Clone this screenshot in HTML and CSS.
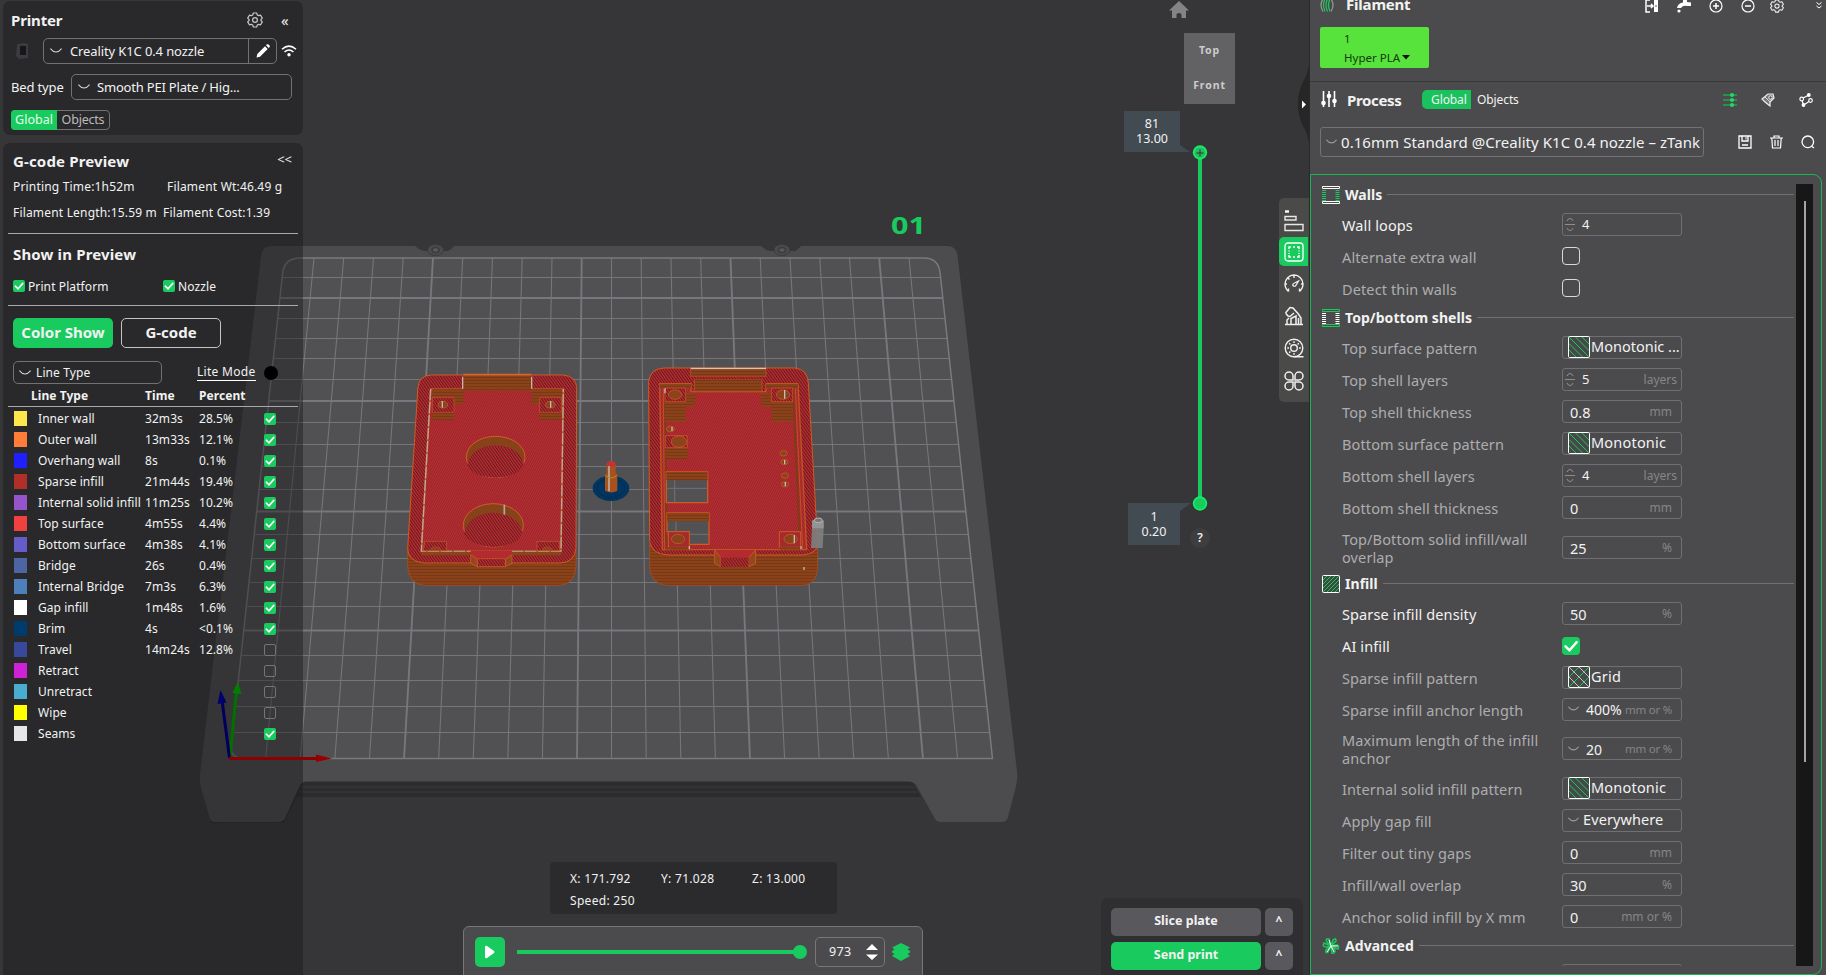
FILE: index.html
```
<!DOCTYPE html>
<html lang="en">
<head>
<meta charset="utf-8">
<title>Slicer preview</title>
<link rel="stylesheet" href="styles.css">
</head>
<body>
<svg width="0" height="0" class="defs">
  <defs>
    <symbol id="chev" viewBox="0 0 12 6"><path d="M.8 1 Q3 4 6 4 Q9 4 11.2 1" fill="none" stroke="currentColor" stroke-width="1.2" stroke-linecap="round"/></symbol>
    <symbol id="tick" viewBox="0 0 12 12"><path d="M2.3 6.2 5 8.8 9.8 3.4" fill="none" stroke="#fff" stroke-width="1.6" stroke-linecap="round"/></symbol>
    <symbol id="gear" viewBox="0 0 16 16"><path d="M6.3 1h3.4l.6 2 1.3.7 2-.5 1.7 2.9L13.900 7.600v.9l1.400 1.400-1.700 2.900-2-.5-1.300.7-.6 2H6.300l-.6-2-1.300-.7-2 .5L.7 9.900l1.400-1.400v-.9L.7 6.100l1.700-2.900 2 .5L5.700 3z" fill="none" stroke="currentColor" stroke-width="1.200" stroke-linejoin="round"/><circle cx="8" cy="8" r="2.400" fill="none" stroke="currentColor" stroke-width="1.200"/></symbol>
    <symbol id="spin" viewBox="0 0 10 15"><path d="M2 4Q3 1.500 5 1.500T8 4M2 11Q3 13.500 5 13.500T8 11M0 7.500H10" fill="none" stroke="currentColor" stroke-width="1"/></symbol>
    <symbol id="hatch" viewBox="0 0 22 22"><rect x=".5" y=".5" width="21" height="21" rx="1" fill="#454a48"/><path d="M1 14l7 7M1 7.500l13.500 13.500M1 1l20 20M7.500 1 21 14.500M14 1 21 8" stroke="#1cc75d" stroke-width="1" fill="none"/><rect x=".5" y=".5" width="21" height="21" rx="1" fill="none" stroke="#fff"/></symbol>
    <symbol id="gridpat" viewBox="0 0 22 22"><rect x=".5" y=".5" width="21" height="21" rx="1" fill="#474948"/><path d="M1 11 11 1M1 21 21 1M11 21 21 11" stroke="#1cc75d" fill="none"/><path d="M1 11 11 21M1 1 21 21M11 1 21 11" stroke="#c8c8c8" fill="none"/><rect x=".5" y=".5" width="21" height="21" rx="1" fill="none" stroke="#fff"/></symbol>
  </defs>
</svg>
<div class="app">
<main class="viewport">
  <svg class="scene" viewBox="0 0 1310 975" width="1310" height="975">
    <defs>
      <clipPath id="bed"><path d="M300 258H924Q938 258 940 272L993 759H243Q231 759 231 748L282.500 274Q284 258 300 258Z"/></clipPath>
      <pattern id="top" width="6" height="6" patternUnits="userSpaceOnUse" patternTransform="rotate(28)"><rect width="6" height="6" fill="#bb2d33"/><rect width="2.400" height="6" fill="#8e2527"/></pattern>
      <pattern id="rim" width="7" height="7" patternUnits="userSpaceOnUse" patternTransform="rotate(-35)"><rect width="7" height="7" fill="#c02e35"/><rect width="3.300" height="7" fill="#651a1b"/></pattern>
      <pattern id="side" width="8" height="9" patternUnits="userSpaceOnUse"><rect width="8" height="9" fill="#8a421b"/><rect width="8" height="3" fill="#7a3815"/></pattern>
    </defs>
    <path d="M303 781H912L921 797H296Z" fill="#2c2c2e"/>
    <path d="M302 787H914M299 792H917" stroke="#3b3b3d" fill="none"/>
    <path d="M210 822Q213 825 220 823H284L303 784 300 782 281 820Z" fill="#2d2d2f"/>
    <path d="M271 246H415Q419 250 424 251H448Q452 249 454 246H761Q765 250 770 251H795Q799 249 801 246H947Q956 246 957.500 255L1017.500 776Q1017 784 1014 794L1008 817Q1007 822 1001 822H941Q936 822 934 817L916 785Q914 781.500 908 781.500H307Q302 781.500 300 785L286 816Q284 822 278 822H216Q211 822 209.500 817L200.500 786Q199.500 780 200 775L261 256Q262 246 271 246Z" fill="#4c4c4e"/>
    <path d="M300 258H924Q938 258 940 272L993 759H231L282.500 274Q284 258 300 258Z" fill="#515153"/>
    <g fill="#4b4b4d" stroke="#3b3b3d"><ellipse cx="435.600" cy="250" rx="8" ry="5.500"/><ellipse cx="782" cy="250" rx="8" ry="5.500"/><ellipse cx="435.600" cy="250" rx="3.500" ry="2.500" fill="#5a5a5c" stroke-width="1.500"/><ellipse cx="782" cy="250" rx="3.500" ry="2.500" fill="#5a5a5c" stroke-width="1.500"/></g>
    <g clip-path="url(#bed)">
      <path d="M314 258 265.600 759M343.700 258 300.200 759M373.500 258 334.800 759M403.200 258 369.400 759M462.700 258 438.600 759M492.500 258 473.200 759M522.200 258 507.800 759M552 258 542.400 759M611.500 258V759M641.200 258 646.200 759M671 258 680.800 759M700.700 258 715.400 759M760.200 258 784.600 759M790 258 819.200 759M819.700 258 853.800 759M849.500 258 888.400 759M909 258 957.600 759M230 277.500H995M230 318.500H995M230 338.500H995M230 358.500H995M230 379.500H995M230 422.500H995M230 444.500H995M230 466.500H995M230 489.500H995M230 534.500H995M230 558.500H995M230 582.500H995M230 606.500H995M230 655.500H995M230 680.500H995M230 706.500H995M230 732.500H995" stroke="#76767a" stroke-width="1.100" fill="none"/>
      <path d="M433 258 404 759M581.700 258 577 759M730.500 258 750 759M879.200 258 923 759M230 298H995M230 401H995M230 511.500H995M230 630.500H995" stroke="#77777d" stroke-width="1.900" fill="none"/>
    </g>
    <path d="M300 258H924Q938 258 940 272L992.500 758.500H243Q231 758 231 748L282.500 274Q284 258 300 258Z" fill="none" stroke="#7a7a7e" stroke-width="1.500"/>
    <text x="891" y="234" class="plate-no" textLength="35" lengthAdjust="spacingAndGlyphs">01</text>

    <g transform="translate(390 350) scale(.33333)" stroke-linejoin="round">
      <!-- enclosure lid -->
      <path d="M53 595V650Q58 705 105 706H510Q555 703 558 650V595Z" fill="url(#side)" stroke="#b05220" stroke-width="2"/>
      <path d="M84 110Q88 76 125 75H518Q558 78 560 112L558 595Q553 637 512 639H100Q53 633 53 595Z" fill="url(#rim)" stroke="#cf5a22" stroke-width="3"/>
      <path d="M122 117H520L513 604H94Z" fill="url(#top)" stroke="#c0561f" stroke-width="5"/>
      <path d="M122 117 94 604H242M366 604H513L520 117" fill="none" stroke="#b9aa9c" stroke-width="4" stroke-dasharray="34 5"/>
      <path d="M127 118H220V162H192V140H127ZM424 118H516V140H449V162H424ZM220 75H424V122H220Z" fill="url(#side)"/>
      <path d="M220 74H424" stroke="#d9652a" stroke-width="5"/><path d="M218 80V116M425 80V116" stroke="#c7b5a6" stroke-width="4"/>
      <path d="M127 142H192V187H127ZM449 142H514V187H449Z" fill="url(#rim)" stroke="#c8591f" stroke-width="2"/>
      <path d="M127 188H192V209H127ZM449 188H514V209H449Z" fill="url(#side)"/>
      <g fill="#8a431b" stroke="#cf6228" stroke-width="2"><ellipse cx="159" cy="164" rx="14" ry="10"/><ellipse cx="481" cy="164" rx="14" ry="10"/></g>
      <path d="M157 153V173M482 153V173" stroke="#bbb" stroke-width="4"/>
      <g stroke="#d9652a" stroke-width="2.500"><ellipse cx="317" cy="321" rx="88" ry="62" fill="#87421a"/><ellipse cx="310" cy="526" rx="90" ry="65" fill="#87421a"/></g>
      <path d="M232 343Q245 288 317 286Q388 288 402 343Q387 382 317 383Q245 381 232 343ZM222 550Q235 492 310 488Q385 492 398 550Q382 588 310 591Q240 588 222 550Z" fill="url(#rim)"/>
      <path d="M343 464V494" stroke="#aaa" stroke-width="5"/>
      <path d="M104 574H170V602H100ZM441 574H508V602H441Z" fill="url(#rim)" stroke="#cf5a22" stroke-width="2"/>
      <path d="M121 598Q135 582 154 598ZM456 598Q472 582 488 598Z" fill="#8a431b" stroke="#cf6228"/>
      <path d="M94 605H242V616H94ZM366 605H514V616H366Z" fill="#8b4319"/>
      <path d="M242 603H366L362 625H246Z" fill="#b32b2f"/>
      <path d="M242 614 262 628V650L242 640ZM366 614 346 628V650L366 640Z" fill="#92471c" stroke="#d9652a" stroke-width="2"/>
      <path d="M262 626H346V650H262Z" fill="url(#rim)" stroke="#d9652a" stroke-width="2"/>
      <!-- button post with brim -->
      <ellipse cx="663" cy="415" rx="55" ry="38" fill="#003661"/><ellipse cx="663" cy="414" rx="42" ry="28" fill="none" stroke="#062a48" stroke-width="3"/><path d="M655 428 648 452M672 428 682 451" stroke="#062a48" stroke-width="2"/>
      <path d="M645 377Q645 372 650 370V342Q651 334 663 334Q675 334 677 342V370Q682 372 682 378V422Q664 433 645 422Z" fill="#a9501f"/>
      <ellipse cx="663" cy="342" rx="13" ry="8" fill="#c93034"/><path d="M657 348V424" stroke="#c9c1b8" stroke-width="4"/><path d="M646 376Q663 392 681 376" fill="none" stroke="#a29622" stroke-width="3"/>
      <!-- enclosure base -->
      <path d="M779 585V655Q785 703 830 706H1242Q1280 700 1283 655V590Z" fill="url(#side)" stroke="#b05220" stroke-width="2"/>
      <path d="M776 95Q780 56 822 54H1215Q1252 58 1255 98L1283 580Q1284 610 1240 615H835Q785 613 779 575Z" fill="url(#rim)" stroke="#cf5a22" stroke-width="3"/>
      <path d="M809 101H903V125H1128V101H1224L1250 599H817Z" fill="url(#top)" stroke="#c0561f" stroke-width="4"/>
      <path d="M825 115 830 599M1209 115 1231 599" fill="none" stroke="#7f3b17" stroke-width="6"/><path d="M820 115 824 599M1216 115 1238 599" fill="none" stroke="#d0602a" stroke-width="2"/>
      <path d="M902 57H1128V80H902ZM913 87H1116V125H913Z" fill="url(#side)" stroke="#c55a24" stroke-width="2"/><path d="M902 80H1128V88H902Z" fill="url(#rim)"/>
      <path d="M902 55H1128" stroke="#cfc5bd" stroke-width="4"/>
      <path d="M809 102H903V115H809ZM888 130H915V170H888ZM1114 130H1144V170H1114ZM1128 102H1224V115H1128ZM824 156H887V215H824ZM1144 156H1208V215H1144ZM826 294H892V327H826Z" fill="url(#side)"/>
      <path d="M825 114H887V155H825ZM1145 114H1208V155H1145ZM826 257H892V293H826Z" fill="url(#rim)" stroke="#cf5a22" stroke-width="2"/>
      <path d="M829 366H953V458H829ZM831 489H957V583H898V545H831Z" fill="#525254" stroke="#cf5a22" stroke-width="4"/>
      <path d="M854 391V458M858 514V545M829 415H953M831 553H957" stroke="#717175" stroke-width="3" fill="none"/>
      <path d="M829 366H953V391H829ZM831 489H957V514H831Z" fill="url(#side)"/>
      <path d="M835 545H898V592H835ZM1168 545H1232V592H1168Z" fill="#a52a2c" stroke="#cf5a22" stroke-width="3"/><path d="M836 591H900V599H836ZM1170 591H1234V599H1170Z" fill="#85401a"/>
      <g fill="#8a431b" stroke="#cf6228" stroke-width="2"><ellipse cx="855" cy="134" rx="20" ry="14"/><ellipse cx="1179" cy="134" rx="20" ry="14"/><ellipse cx="841" cy="237" rx="12" ry="8"/><ellipse cx="867" cy="275" rx="23" ry="17"/><ellipse cx="1181" cy="310" rx="11" ry="8"/><ellipse cx="1183" cy="336" rx="11" ry="8"/><ellipse cx="1185" cy="377" rx="11" ry="8"/><ellipse cx="1185" cy="403" rx="11" ry="8"/><ellipse cx="864" cy="567" rx="20" ry="14"/><ellipse cx="1202" cy="567" rx="20" ry="14"/></g>
      <path d="M1184 120V146M1213 555V580M846 230V243M1184 330V343M1186 396V409M898 589V598M1233 589V598M1242 651V660M825 115V130" stroke="#c4beb8" stroke-width="4"/>
      <path d="M974 600H1097V625H974Z" fill="#b32b2f"/>
      <path d="M974 600V640L992 650V623ZM1097 600V640L1076 650V623Z" fill="#92471c" stroke="#d9652a" stroke-width="2"/><path d="M992 623H1076V650H992Z" fill="url(#rim)"/>
      <!-- nozzle marker -->
      <path d="M1266 512Q1284 500 1301 512V535L1298 594H1263L1266 535Z" fill="#7e8080" opacity=".9"/><path d="M1266 512Q1284 500 1301 512V535H1266Z" fill="#939594"/><ellipse cx="1285" cy="511" rx="12" ry="7" fill="#777978" stroke="#b5b6b5" stroke-width="3"/>
    </g>
  </svg>

  <section class="card printer">
    <header><h2>Printer</h2><svg class="ic gear" width="16" height="16"><use href="#gear"/></svg><span class="fold">«</span></header>
    <div class="line dev">
      <svg width="14" height="18"><path d="M2 2 9 1 13 2V16L4 17 1 14Z" fill="#3b3b42"/><path d="M5 4h6v9H5z" fill="#17171a"/></svg>
      <div class="field sel"><svg width="12" height="6"><use href="#chev"/></svg><span>Creality K1C 0.4 nozzle</span><i class="edit"><svg width="16" height="16" viewBox="0 0 16 16"><path d="M1.500 14.500 2.300 11 10 3.300 12.700 6 5 13.700ZM11 2.300 12 1.300Q13 .8 14.200 2 15.200 3 14.700 4L13.700 5Z" fill="#fff"/></svg></i></div>
      <svg width="16" height="12" viewBox="0 0 16 12"><path d="M1 4.300Q8-2 15 4.300M3.500 7Q8 3 12.500 7" fill="none" stroke="#fff" stroke-width="1.500"/><circle cx="8" cy="9.800" r="1.700" fill="#fff"/></svg>
    </div>
    <div class="line bed"><label>Bed type</label><div class="field sel"><svg width="12" height="6"><use href="#chev"/></svg><span>Smooth PEI Plate / Hig...</span></div></div>
    <div class="toggle"><b>Global</b><span>Objects</span></div>
  </section>

  <section class="card gcode">
    <header><h2>G-code Preview</h2><span class="fold">&lt;&lt;</span></header>
    <div class="stats s1"><span>Printing Time:1h52m</span><span>Filament Wt:46.49 g</span></div>
    <div class="stats s2"><span>Filament Length:15.59 m</span><span>Filament Cost:1.39</span></div>
    <h2 class="sub">Show in Preview</h2>
    <div class="shows"><span><svg class="ck on" width="12" height="12"><use href="#tick"/></svg>Print Platform</span><span><svg class="ck on" width="12" height="12"><use href="#tick"/></svg>Nozzle</span></div>
    <div class="modes"><button class="on">Color Show</button><button>G-code</button></div>
    <div class="kind"><div class="field sel"><svg width="12" height="6"><use href="#chev"/></svg><span>Line Type</span></div><a>Lite Mode</a><i class="dot"></i></div>
    <div class="row head"><span></span><b>Line Type</b><b>Time</b><b>Percent</b></div>
    <div class="rows">
      <div class="row"><i class="sw c1"></i><span>Inner wall</span><span>32m3s</span><span>28.5%</span><svg class="ck on" width="12" height="12"><use href="#tick"/></svg></div>
      <div class="row"><i class="sw c2"></i><span>Outer wall</span><span>13m33s</span><span>12.1%</span><svg class="ck on" width="12" height="12"><use href="#tick"/></svg></div>
      <div class="row"><i class="sw c3"></i><span>Overhang wall</span><span>8s</span><span>0.1%</span><svg class="ck on" width="12" height="12"><use href="#tick"/></svg></div>
      <div class="row"><i class="sw c4"></i><span>Sparse infill</span><span>21m44s</span><span>19.4%</span><svg class="ck on" width="12" height="12"><use href="#tick"/></svg></div>
      <div class="row"><i class="sw c5"></i><span>Internal solid infill</span><span>11m25s</span><span>10.2%</span><svg class="ck on" width="12" height="12"><use href="#tick"/></svg></div>
      <div class="row"><i class="sw c6"></i><span>Top surface</span><span>4m55s</span><span>4.4%</span><svg class="ck on" width="12" height="12"><use href="#tick"/></svg></div>
      <div class="row"><i class="sw c7"></i><span>Bottom surface</span><span>4m38s</span><span>4.1%</span><svg class="ck on" width="12" height="12"><use href="#tick"/></svg></div>
      <div class="row"><i class="sw c8"></i><span>Bridge</span><span>26s</span><span>0.4%</span><svg class="ck on" width="12" height="12"><use href="#tick"/></svg></div>
      <div class="row"><i class="sw c9"></i><span>Internal Bridge</span><span>7m3s</span><span>6.3%</span><svg class="ck on" width="12" height="12"><use href="#tick"/></svg></div>
      <div class="row"><i class="sw c10"></i><span>Gap infill</span><span>1m48s</span><span>1.6%</span><svg class="ck on" width="12" height="12"><use href="#tick"/></svg></div>
      <div class="row"><i class="sw c11"></i><span>Brim</span><span>4s</span><span>&lt;0.1%</span><svg class="ck on" width="12" height="12"><use href="#tick"/></svg></div>
      <div class="row"><i class="sw c12"></i><span>Travel</span><span>14m24s</span><span>12.8%</span><i class="ck off"></i></div>
      <div class="row"><i class="sw c13"></i><span>Retract</span><span></span><span></span><i class="ck off"></i></div>
      <div class="row"><i class="sw c14"></i><span>Unretract</span><span></span><span></span><i class="ck off"></i></div>
      <div class="row"><i class="sw c15"></i><span>Wipe</span><span></span><span></span><i class="ck off"></i></div>
      <div class="row"><i class="sw c16"></i><span>Seams</span><span></span><span></span><svg class="ck on" width="12" height="12"><use href="#tick"/></svg></div>
    </div>
  </section>

  <svg class="axes" width="120" height="90" viewBox="215 675 120 90">
    <path d="M230 758 236.500 690" stroke="#007000" stroke-width="3"/><path d="M237.500 682 241.500 694 232.500 693Z" fill="#008000"/>
    <path d="M229.500 758 222 700" stroke="#00005c" stroke-width="3"/><path d="M220.500 690 226.500 702.500 217.500 704Z" fill="#00006e"/>
    <path d="M229 758.500H317" stroke="#8e0000" stroke-width="3"/><path d="M316 754.500 332 758.500 316 762Z" fill="#970000"/>
  </svg>

  <svg class="home" width="22" height="18" viewBox="0 0 22 18"><path d="M11 0 21 9.500H18V17H13.500V13.500Q13.500 12 11 12T8.500 13.500V17H4V9.500H1Z" fill="#848486"/></svg>
  <div class="cube"><span>Top</span><span>Front</span></div>
  <div class="bubble hi"><span>81</span><span>13.00</span></div>
  <div class="bubble lo"><span>1</span><span>0.20</span></div>
  <svg class="zbar" width="20" height="372" viewBox="1190 142 20 372"><path d="M1200 152V503" stroke="#19cb5f" stroke-width="4"/><circle cx="1200" cy="152.500" r="7.200" fill="#12ee66"/><circle cx="1200" cy="152.500" r="5.300" fill="#2fb862"/><path d="M1196.500 153H1203.500M1200 149.500V156.500" stroke="#17402a"/><circle cx="1200" cy="503.500" r="7.200" fill="#12f068"/><circle cx="1200" cy="503.500" r="5.500" fill="#19cb5f"/></svg>
  <div class="help">?</div>
  <svg class="handle" width="12" height="78" viewBox="0 0 12 78"><path d="M11 0Q10 8 5 17 0 26 0 39T5 61Q10 69 11 78Z" fill="#262627"/><path d="M4 35.500 8 39.500 4 43.500Z" fill="#fff"/></svg>
  <nav class="tabs">
    <span><svg width="20" height="22" viewBox="0 0 20 22"><path d="M1 1.500H5" stroke="#fff" stroke-width="2.400"/><path d="M1 6.500H12V10H1ZM1 14.500H19V20.500H1Z" fill="none" stroke="#e8e8e8" stroke-width="1.400"/></svg></span>
    <span class="on"><svg width="20" height="20" viewBox="0 0 20 20"><rect x="1" y="1" width="18" height="18" rx="3" fill="none" stroke="#fff" stroke-width="1.300"/><path d="M5 7V5H7M13 5H15V7M15 13V15H13M7 15H5V13M9 5h2M9 15h2M5 8.500v1M15 8.500v1M5 11v1M15 11v1" fill="none" stroke="#fff" stroke-width="1.400"/></svg></span>
    <span><svg width="20" height="20" viewBox="0 0 20 20"><path d="M4.500 17.500Q1 14.500 1 10A9 9 0 0 1 19 10Q19 14.500 15.500 17.500M4.500 17.500V14.500M15.500 17.500V14.500M4 4 5.500 5.500M10 1V4M1 10H3M17 10H19" fill="none" stroke="#f0f0f0" stroke-width="1.400"/><path d="M14.500 7 11.500 12Q9.500 13 8.700 11 9 9.500 10.500 9Z" fill="none" stroke="#f0f0f0" stroke-width="1.300"/></svg></span>
    <span><svg width="20" height="20" viewBox="0 0 20 20"><path d="M1 18.500H19M3 18V14L5 12M1.500 7 6 1.500 9 2 14 7.500 17 12V18M1.500 7 4 10 6 10.500 10 7M7 18V12.500L12 10V18M14.500 18V12" fill="none" stroke="#f0f0f0" stroke-width="1.500"/></svg></span>
    <span><svg width="20" height="20" viewBox="0 0 20 20"><circle cx="10" cy="10" r="8.800" fill="none" stroke="#f0f0f0" stroke-width="1.400"/><circle cx="10" cy="10" r="3.300" fill="none" stroke="#f0f0f0" stroke-width="1.400"/><path d="M10 3.200V5M10 15V16.800M3.200 10H5M15 10H16.800M5.200 5.200 6.400 6.400M13.600 6.400 14.800 5.200M5.200 14.800 6.400 13.600M10 18.800H19.500" stroke="#f0f0f0" stroke-width="1.400"/></svg></span>
    <span><svg width="20" height="20" viewBox="0 0 20 20"><path d="M9 9H5A4 4 0 1 1 9 5ZM11 9H15A4 4 0 1 0 11 5ZM9 11H5A4 4 0 1 0 9 15ZM11 11H15A4 4 0 1 1 11 15Z" fill="none" stroke="#f0f0f0" stroke-width="1.500"/></svg></span>
  </nav>
  <div class="coords"><div><span>X: 171.792</span><span>Y: 71.028</span><span>Z: 13.000</span></div><div>Speed: 250</div></div>
  <div class="player">
    <i class="play"><svg width="12" height="14" viewBox="0 0 12 14"><path d="M1 2Q1 0 3 1L10 6Q11 7 10 8L3 13Q1 14 1 12Z" fill="#fff"/></svg></i>
    <i class="track"><i class="knob"></i></i>
    <div class="num"><span>973</span><svg width="12" height="16" viewBox="0 0 12 16"><path d="M6 0 12 6H0ZM6 16 12 10.500H0Z" fill="#fff"/></svg></div>
    <svg width="18" height="18" viewBox="0 0 18 18"><path d="M9 0 18 4.500 15.500 6.500 18 8 18 9.500 15.500 11 18 13 9 18 0 13 2.500 11 0 9.500V8L2.500 6.500 0 4.500Z" fill="#19cb5f"/></svg>
  </div>
  <div class="actions"><button>Slice plate</button><button class="car">^</button><button class="go">Send print</button><button class="car">^</button></div>
</main>

<aside class="side">
  <div class="fil-head">
    <svg width="14" height="15" viewBox="0 0 14 15"><path d="M3 1Q-1 7 3 13.500M11 1Q15 7 11 13.500" fill="none" stroke="#9a9a9a" stroke-width="1.200"/><path d="M5 1Q2 7 5 13.500M7.500 1Q4.500 7 7.500 13.500M10 1Q7 7 10 13.500" fill="none" stroke="#1cc75d" stroke-width="1.200"/></svg>
    <h2>Filament</h2>
    <svg class="a1" width="14" height="14" viewBox="0 0 14 14"><path d="M5 1H1V13H5M2 7H8M6 5 8 7 6 9" fill="none" stroke="#fff" stroke-width="1.500"/><path d="M9 1H13V13H9Z" fill="#fff"/><path d="M10 7h2" stroke="#4b4b4d"/></svg>
    <svg class="a2" width="14" height="14" viewBox="0 0 14 14"><path d="M6 0H10V3L14 3.500V7H10Q6 6 4 9H0Q1 4 6 3.500Z" fill="#fff"/><circle cx="2" cy="12" r="1.600" fill="#fff"/></svg>
    <svg class="a3" width="14" height="14" viewBox="0 0 14 14"><circle cx="7" cy="7" r="6" fill="none" stroke="#fff" stroke-width="1.200"/><path d="M4 7h6M7 4v6" stroke="#fff" stroke-width="1.500"/></svg>
    <svg class="a4" width="14" height="14" viewBox="0 0 14 14"><circle cx="7" cy="7" r="6" fill="none" stroke="#fff" stroke-width="1.200"/><path d="M4 7h6" stroke="#fff" stroke-width="1.500"/></svg>
    <svg class="a5" width="14" height="14"><use href="#gear"/></svg>
    <svg class="a6" width="6" height="7" viewBox="0 0 6 7"><path d="M.5.5 3 2.500 5.500.5M.5 4 3 6 5.500 4" fill="none" stroke="#fff"/></svg>
  </div>
  <div class="fil-card"><span>1</span><span>Hyper PLA<svg width="8" height="5" viewBox="0 0 8 5"><path d="M0 0H8L4 4.500Z" fill="#111"/></svg></span></div>
  <div class="proc-head">
    <svg width="16" height="17" viewBox="0 0 16 17"><path d="M2.500 0V16M8 0V16M13.500 0V16" stroke="#fff" stroke-width="1.600"/><circle cx="2.500" cy="12" r="2.300" fill="#fff"/><circle cx="8" cy="5" r="2.300" fill="#fff"/><circle cx="13.500" cy="10" r="2.300" fill="#fff"/></svg>
    <h2>Process</h2><b>Global</b><span>Objects</span>
    <svg class="p1" width="14" height="14" viewBox="0 0 14 14"><path d="M0 2H14M0 7H14M0 12H14" stroke="#25a453" stroke-width="1.600"/><g fill="#1fdc66"><circle cx="9" cy="2" r="2"/><circle cx="9" cy="7" r="2"/><circle cx="9" cy="12" r="2"/></g></svg>
    <svg class="p2" width="14" height="14" viewBox="0 0 14 14"><path d="M1 6 7 1H12L13 5 9 9V13L4 9Z" fill="#777" stroke="#eee" stroke-width="1.200"/><circle cx="9.500" cy="4.500" r="1.700" fill="#4b4b4d" stroke="#fff"/><path d="M2 7 8 12M4 4 9 9" stroke="#ddd"/></svg>
    <svg class="p3" width="14" height="14" viewBox="0 0 14 14"><path d="M4 5 9 2.500M5.500 11.500 10 8.500M3.200 8 4.200 11" stroke="#fff" stroke-width="1.200"/><circle cx="2.700" cy="6" r="1.800" fill="none" stroke="#fff" stroke-width="1.200"/><circle cx="9.800" cy="2" r="1.900" fill="#fff"/><circle cx="11.500" cy="7.500" r="1.800" fill="none" stroke="#fff" stroke-width="1.200"/><circle cx="4.500" cy="12" r="1.900" fill="#fff"/></svg>
  </div>
  <div class="preset"><div class="field"><svg width="11" height="6"><use href="#chev"/></svg><span>0.16mm Standard @Creality K1C 0.4 nozzle – zTank</span></div>
    <svg class="q1" width="14" height="14" viewBox="0 0 14 14"><path d="M1 1H13V13H1ZM4 1V6H10V1M4 10H10" fill="none" stroke="#fff" stroke-width="1.300"/><path d="M8 2V4.500" stroke="#fff"/></svg>
    <svg class="q2" width="13" height="14" viewBox="0 0 13 14"><path d="M0 3H13M4 3V1H9V3M1.800 3 2.500 13H10.500L11.200 3M5 5V11M8 5V11" fill="none" stroke="#fff" stroke-width="1.200"/></svg>
    <svg class="q3" width="14" height="14" viewBox="0 0 14 14"><circle cx="6.800" cy="6.800" r="5.800" fill="none" stroke="#fff" stroke-width="1.300"/><path d="M10.500 11 13 13" stroke="#fff" stroke-width="1.300"/></svg>
  </div>
  <div class="settings">
    <div class="list">
      <div class="sec"><svg width="18" height="18" viewBox="0 0 18 18"><path d="M.5.500H17.500V2.500H.5ZM.5 15.500H17.500V17.500H.5Z" fill="none" stroke="#fff"/><path d="M2 4V15M15.500 4V15" stroke="#1cc75d" stroke-width="4" stroke-dasharray="1 1"/></svg><h3>Walls</h3><i></i></div>
      <div class="opt hot"><label>Wall loops</label><div class="box"><svg class="sp" width="10" height="15"><use href="#spin"/></svg><span>4</span></div></div>
      <div class="opt"><label>Alternate extra wall</label><i class="cb"></i></div>
      <div class="opt"><label>Detect thin walls</label><i class="cb"></i></div>
      <div class="sec tall"><svg width="18" height="18" viewBox="0 0 18 18"><path d="M.5.500H17.500V2.500H.5ZM.5 15.500H17.500V17.500H.5Z" fill="none" stroke="#1cc75d"/><path d="M2 4V15M15.500 4V15" stroke="#fff" stroke-width="4" stroke-dasharray="1 1"/></svg><h3>Top/bottom shells</h3><i></i></div>
      <div class="opt"><label>Top surface pattern</label><div class="box pat"><svg width="22" height="22"><use href="#hatch"/></svg><span class="cut">Monotonic ...</span></div></div>
      <div class="opt"><label>Top shell layers</label><div class="box"><svg class="sp" width="10" height="15"><use href="#spin"/></svg><span>5</span><em>layers</em></div></div>
      <div class="opt"><label>Top shell thickness</label><div class="box val"><span>0.8</span><em>mm</em></div></div>
      <div class="opt"><label>Bottom surface pattern</label><div class="box pat"><svg width="22" height="22"><use href="#hatch"/></svg><span>Monotonic</span></div></div>
      <div class="opt"><label>Bottom shell layers</label><div class="box"><svg class="sp" width="10" height="15"><use href="#spin"/></svg><span>4</span><em>layers</em></div></div>
      <div class="opt"><label>Bottom shell thickness</label><div class="box val"><span>0</span><em>mm</em></div></div>
      <div class="opt two"><label>Top/Bottom solid infill/wall<br>overlap</label><div class="box val"><span>25</span><em>%</em></div></div>
      <div class="sec"><svg width="18" height="18" viewBox="0 0 18 18"><rect x=".5" y=".5" width="17" height="17" rx="1" fill="#3b4b42"/><path d="M1 5 5 1M1 9 9 1M1 13 13 1M1 17 17 1M5 17 17 5M9 17 17 9M13 17 17 13" stroke="#1cc75d"/><rect x=".5" y=".5" width="17" height="17" rx="1" fill="none" stroke="#fff"/></svg><h3>Infill</h3><i></i></div>
      <div class="opt hot"><label>Sparse infill density</label><div class="box val"><span>50</span><em>%</em></div></div>
      <div class="opt hot"><label>AI infill</label><svg class="cb on" width="18" height="18"><use href="#tick"/></svg></div>
      <div class="opt"><label>Sparse infill pattern</label><div class="box pat"><svg width="22" height="22"><use href="#gridpat"/></svg><span>Grid</span></div></div>
      <div class="opt"><label>Sparse infill anchor length</label><div class="box drop"><svg width="11" height="6"><use href="#chev"/></svg><span>400%</span><em>mm or %</em></div></div>
      <div class="opt two b"><label>Maximum length of the infill<br>anchor</label><div class="box drop"><svg width="11" height="6"><use href="#chev"/></svg><span>20</span><em>mm or %</em></div></div>
      <div class="opt"><label>Internal solid infill pattern</label><div class="box pat"><svg width="22" height="22"><use href="#hatch"/></svg><span>Monotonic</span></div></div>
      <div class="opt"><label>Apply gap fill</label><div class="box drop tight"><svg width="11" height="6"><use href="#chev"/></svg><span>Everywhere</span></div></div>
      <div class="opt"><label>Filter out tiny gaps</label><div class="box val"><span>0</span><em>mm</em></div></div>
      <div class="opt"><label>Infill/wall overlap</label><div class="box val"><span>30</span><em>%</em></div></div>
      <div class="opt"><label>Anchor solid infill by X mm</label><div class="box val"><span>0</span><em>mm or %</em></div></div>
      <div class="sec tall"><svg width="18" height="18" viewBox="0 0 18 18"><g fill="none" stroke="#1cc75d" stroke-width="1.600"><path d="M9 9 5 5Q3 1 7 2ZM9 9 11 3Q14 0 14 4ZM9 9 14 8Q18 8 16 12ZM9 9 13 13Q13 17 10 16ZM9 9 6 15Q3 17 4 13ZM9 9 4 10Q0 10 2 6Z"/></g><path d="M9 9 7 3M9 9 16 9M9 9 5 15M9 9 12 15" stroke="#fff"/></svg><h3>Advanced</h3><i></i></div>
      <div class="opt"><label></label><div class="box"></div></div>
    </div>
    <div class="scroll"><i></i></div>
  </div>
</aside>
</div>
</body>
</html>
```
FILE: styles.css
```
* { box-sizing: border-box; }
body { margin: 0; background: #363638; font-family: "Noto Sans", "Open Sans", sans-serif; color: #f2f2f2; overflow: hidden; }
h2, h3 { margin: 0; font-weight: 700; white-space: nowrap; }
i, em { font-style: normal; }
svg { display: block; flex: none; }
span, label, a, b { white-space: nowrap; }
.defs { position: absolute; }
button { font: inherit; color: inherit; border: 0; padding: 0; }
.app { display: grid; grid-template-columns: 1310px 516px; height: 975px; overflow: hidden; }

.viewport { position: relative; height: 975px; overflow: hidden; padding: 1px 0 0 3px; display: flex; flex-direction: column; gap: 8px; align-items: flex-start; background: #363638; }
.scene { position: absolute; left: 0; top: 0; }
.plate-no { font: 700 24px "Noto Sans", sans-serif; fill: #19cb5f; }
.card { position: relative; width: 300px; border-radius: 7px; background: rgba(25, 25, 28, .44); font-size: 13px; }
.card header { display: flex; align-items: center; }
.card h2 { font-size: 15px; }
.field { display: flex; align-items: center; border: 1px solid #727274; border-radius: 5px; }
.field svg { color: #ddd; }

.printer { height: 134px; padding: 7px 0 0 8px; }
.printer header { height: 24px; }
.printer .gear { margin-left: auto; color: #c9c9c9; }
.printer .fold { width: 40px; padding-left: 18px; font-size: 15px; }
.printer h2 { letter-spacing: -.15px; }
.line { display: flex; align-items: center; }
.dev { height: 26px; margin-top: 6px; padding-left: 4px; }
.dev .field { width: 234px; height: 26px; margin: 0 4px 0 14px; padding-left: 6px; }
.dev .field span { margin-left: 8px; flex: 1; letter-spacing: -.12px; }
.edit { width: 28px; height: 24px; border-left: 1px solid #727274; display: grid; place-items: center; }
.bed { margin-top: 10px; }
.bed .field { width: 221px; height: 26px; margin-left: 7px; padding-left: 6px; }
.bed .field span { margin-left: 7px; letter-spacing: -.2px; }
.bed label { width: 53px; letter-spacing: -.15px; }
.toggle { display: flex; width: 99px; height: 20px; margin-top: 10px; border: 1px solid #727274; border-radius: 4px; font-size: 12.500px; line-height: 18px; color: #bbb; }
.toggle b { width: 46px; margin: -1px 0 -1px -1px; line-height: 20px; text-align: center; font-weight: 400; color: #e4ffe9; background: #19cb5f; border-radius: 4px 0 0 4px; }
.toggle span { flex: 1; text-align: center; letter-spacing: -.2px; }

.gcode { height: 832px; padding: 5px 5px 0 5px; border-radius: 7px 7px 0 0; font-size: 12px; }
.gcode header { height: 25px; padding: 0 6px 0 5px; justify-content: space-between; }
.gcode h2 { letter-spacing: .15px; }
.gcode .fold { font-size: 13px; margin-top: -3px; }
.stats { display: grid; grid-template-columns: 154px 1fr; height: 26px; align-items: center; padding-left: 5px; letter-spacing: .18px; }
.s2 { grid-template-columns: 150px 1fr; }
.sub { height: 44px; line-height: 41px; padding-left: 5px; margin-top: 8px; border-top: 1px solid #a9a9ab; }
.shows { display: grid; grid-template-columns: 150px 1fr; height: 29px; padding: 1px 0 0 5px; border-bottom: 1px solid #a9a9ab; letter-spacing: .1px; }
.shows span { display: flex; align-items: center; gap: 3px; height: 16px; }
.ck { border-radius: 2px; width: 12px; height: 12px; }
.ck.on { background: #19cb5f; }
.ck.off { border: 1px solid #747476; }
.modes { display: flex; gap: 8px; padding: 12px 0 0 5px; }
.modes button { width: 100px; height: 30px; border-radius: 5px; font-weight: 700; font-size: 15px; line-height: 26px; padding-bottom: 2px; background: none; border: 1px solid #c4c4c4; }
.modes .on { background: #19cb5f; border: 0; }
.kind { display: flex; align-items: center; padding: 13px 0 0 5px; height: 36px; }
.kind .field { width: 149px; height: 23px; padding-left: 5px; }
.kind .field span { margin-left: 5px; letter-spacing: .1px; }
.kind a { margin-left: 35px; width: 59px; height: 17px; line-height: 16px; border-bottom: 1px solid #fff; letter-spacing: .3px; }
.dot { width: 14px; height: 14px; margin-left: 8px; border-radius: 50%; background: #000; }
.row { display: grid; grid-template-columns: 25px 107px 54px 65px 12px; height: 21px; align-items: center; padding-left: 5px; letter-spacing: .06px; }
.head { grid-template-columns: 18px 114px 54px 1fr; height: 23px; border-bottom: 1px solid #a9a9ab; }
.rows { padding-top: 1px; }
.sw { width: 13px; height: 15px; margin-left: 1px; }
.c1 { background: #ffe64d; } .c2 { background: #ff7d38; } .c3 { background: #1f1fff; } .c4 { background: #b03029; }
.c5 { background: #9654cc; } .c6 { background: #f04040; } .c7 { background: #665cc7; } .c8 { background: #4d66a3; }
.c9 { background: #4d80ba; } .c10 { background: #fff; } .c11 { background: #003b6e; } .c12 { background: #38489b; }
.c13 { background: #cd22d6; } .c14 { background: #49adcf; } .c15 { background: #ff0; } .c16 { background: #e6e6e6; }

.axes { position: absolute; left: 215px; top: 675px; }
.home { position: absolute; left: 1168px; top: 1px; }
.cube { position: absolute; left: 1184px; top: 33px; width: 51px; height: 71px; padding-top: 8px; background: #626264; font: 700 10.500px "Noto Sans", sans-serif; color: #ccc; display: grid; grid-template-rows: 35px 35px; text-align: center; line-height: 19px; letter-spacing: .9px; }
.bubble { position: absolute; width: 56px; height: 41px; padding-top: 5px; background: #424a52; display: grid; text-align: center; font-size: 12.500px; line-height: 15px; align-content: start; }
.bubble.hi { left: 1124px; top: 111px; }
.bubble.hi::after { content: ""; position: absolute; left: 56px; top: 34px; border-left: 10px solid #424a52; border-top: 7px solid transparent; }
.bubble.lo { left: 1128px; top: 503px; width: 52px; height: 42px; padding-top: 6px; }
.bubble.lo::after { content: ""; position: absolute; left: 52px; top: 0; border-left: 11px solid #424a52; border-bottom: 8px solid transparent; }
.zbar { position: absolute; left: 1190px; top: 142px; }
.help { position: absolute; left: 1190px; top: 528px; width: 20px; height: 20px; border-radius: 50%; background: #3e3e40; text-align: center; font: 600 12px/19px "Noto Sans", sans-serif; }
.handle { position: absolute; left: 1298px; top: 65px; }
.tabs { position: absolute; left: 1279px; top: 198px; width: 30px; height: 204px; padding-top: 6px; border-radius: 5px 0 0 5px; background: #4a4b48; display: grid; grid-template-rows: 33px 29px 36px 28px 36px 29px; }
.tabs span { display: grid; place-items: center; }
.tabs .on { width: 29px; background: #19cb5f; border-radius: 5px 0 0 5px; }
.coords { position: absolute; left: 550px; top: 862px; width: 287px; height: 52px; padding: 6px 0 0 20px; border-radius: 4px; background: #2b2b2d; font-size: 12px; letter-spacing: .3px; line-height: 22px; }
.coords div:first-child { display: grid; grid-template-columns: 91px 91px 1fr; }
.player { position: absolute; left: 463px; top: 926px; width: 460px; height: 56px; border: 1px solid #77777a; border-radius: 6px; background: #4b4b4d; display: flex; align-items: center; padding: 0 0 4px 11px; }
.play { width: 30px; height: 30px; border-radius: 5px; background: #19cb5f; display: grid; place-items: center; }
.track { width: 283px; height: 4px; margin: 0 15px 0 12px; background: #19cb5f; position: relative; }
.knob { position: absolute; right: -7px; top: -5px; width: 14px; height: 14px; border-radius: 50%; background: #19cb5f; }
.num { width: 70px; height: 30px; border: 1px solid #77777a; border-radius: 5px; margin-right: 7px; display: flex; align-items: center; justify-content: space-between; padding: 0 6px 2px 13px; font-size: 12.500px; }
.num span { letter-spacing: .3px; }
.num svg { margin-top: 2px; }
.actions { position: absolute; left: 1101px; top: 898px; width: 202px; height: 77px; padding: 10px 0 0 10px; border-radius: 7px 7px 0 0; background: #2f2f31; display: grid; grid-template-columns: 150px 28px; grid-template-rows: 28px 28px; gap: 6px 4px; }
.actions button { border-radius: 5px; background: #58585d; font-weight: 700; font-size: 12.500px; line-height: 26px; padding-bottom: 2px; }
.actions .go { background: #19cb5f; }
.actions .car { font-size: 12px; }

.side { background: #4b4b4d; height: 975px; overflow: hidden; box-shadow: -1px 0 #29292b; z-index: 1; padding-left: 10px; }
.side h2 { font-size: 15px; letter-spacing: -.2px; }
.fil-head { display: flex; align-items: flex-end; height: 13px; }
.fil-head h2 { margin-left: 12px; width: 299px; line-height: 13px; height: 13px; margin-bottom: 2px; }
.fil-head .a2 { margin-left: 18px; } .fil-head .a3 { margin-left: 18px; } .fil-head .a4 { margin-left: 18px; } .fil-head .a5 { margin-left: 15px; } .fil-head .a6 { margin: 0 0 4px 32px; }
.fil-card { width: 109px; height: 41px; margin-top: 14px; padding: 2px 0 0 24px; border-radius: 2px; background: #58e23c; color: #123c0c; font-size: 11.500px; line-height: 19px; display: grid; grid-template-rows: 18px 20px; }
.fil-card span { display: flex; align-items: center; gap: 2px; }
.proc-head { display: flex; align-items: center; margin: 13px 0 0 -10px; padding: 0 0 2px 11px; border-top: 1px solid #39393b; height: 38px; }
.proc-head h2 { margin-left: 10px; width: 75px; letter-spacing: -.35px; }
.proc-head b { width: 49px; height: 19px; line-height: 19px; padding-left: 9px; background: #19c25c; border-radius: 5px 0 0 5px; font-weight: 400; font-size: 12px; letter-spacing: -.1px; }
.proc-head span { margin-left: 6px; width: 246px; font-size: 12px; letter-spacing: -.1px; }
.p2, .p3 { margin-left: 24px; }
.preset { display: flex; align-items: center; margin-top: 8px; height: 30px; }
.preset .field { width: 384px; flex: none; height: 30px; padding-left: 5px; border-radius: 3px; font-size: 15px; margin-right: 34px; }
.preset .field svg { color: #999; }
.preset span { margin-left: 4px; letter-spacing: .06px; }
.q2 { margin-left: 18px; } .q3 { margin-left: 18px; }
.settings { margin: 17px 0 0 -10px; width: 512px; height: 801px; border: 1px solid #1cb556; border-radius: 0 9px 9px 0; padding: 7px 0 0 11px; display: flex; gap: 2px; }
.list { width: 472px; height: 784px; overflow: hidden; }
.sec { height: 26px; display: flex; align-items: center; gap: 5px; padding-bottom: 1px; }
.sec.tall { height: 27px; padding-bottom: 0; }
.sec h3 { font-size: 14px; letter-spacing: .05px; }
.sec i { flex: 1; height: 1px; background: #717173; }
.opt { height: 32px; display: grid; grid-template-columns: 220px 120px; align-items: center; padding-left: 20px; font-size: 14.500px; color: #adadaf; }
.opt.hot { color: #f2f2f2; }
.opt.two { height: 48px; line-height: 18px; }
.opt.two.b { height: 47px; }
.opt label { letter-spacing: .12px; padding-top: 1px; }
.box { position: relative; width: 120px; height: 23px; border: 1px solid #707072; border-radius: 3px; display: flex; align-items: center; color: #f2f2f2; padding-left: 2px; line-height: 21px; }
.box span { font-size: 13px; margin-left: 7px; }
.box em { margin-left: auto; padding-right: 9px; font-size: 12px; color: #858587; }
.box .sp ~ em { padding-right: 4px; }
.sp { color: #8e8e90; }
.box.val span { font-size: 14.500px; margin: 2px 0 0 5px; }
.box.pat { padding-left: 5px; }
.box.pat span { font-size: 14.500px; margin: -2px 0 0 1px; letter-spacing: .2px; }
.box.pat .cut { letter-spacing: 0; }
.box.drop { padding-left: 5px; }
.box.drop svg { color: #98989a; }
.box.drop span { font-size: 14px; margin: 1px 0 0 7px; letter-spacing: 0; }
.box.drop em { font-size: 11.500px; letter-spacing: -.25px; }
.box.tight span { margin: -1px 0 0 4px; font-size: 14.500px; letter-spacing: .1px; }
.cb { width: 18px; height: 18px; border: 1px solid #d8d8da; border-radius: 4px; }
.cb.on { background: #19cb5f; border: 0; margin-top: 1px; }
.scroll { width: 17px; height: 782px; margin-top: 2px; background: #171717; padding: 17px 0 0 8px; }
.scroll i { display: block; width: 2px; height: 561px; background: #a4a4a4; }
```
